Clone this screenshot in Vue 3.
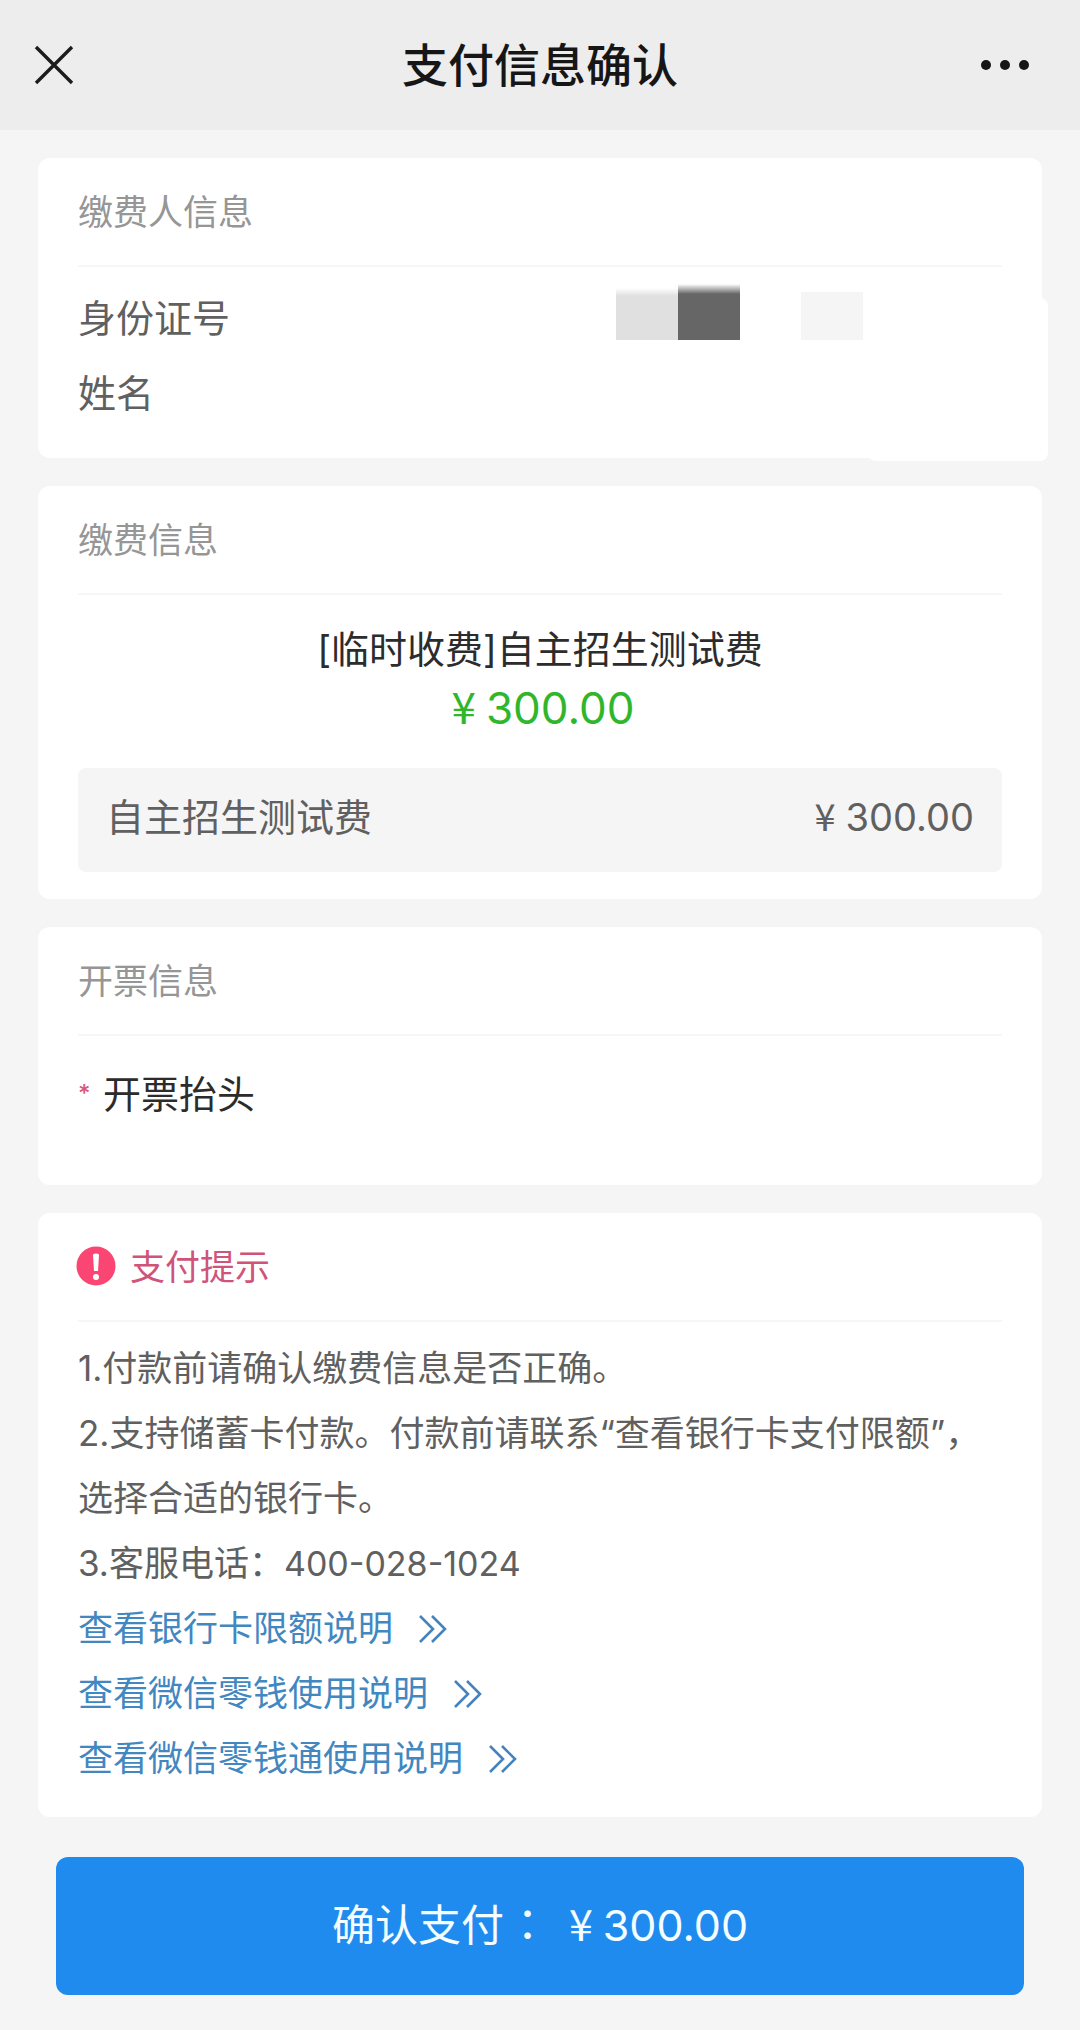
<script setup>
const notes = [
  { text: '1.付款前请确认缴费信息是否正确。' },
  { text: '2.支持储蓄卡付款。付款前请联系“查看银行卡支付限额”，选择合适的银行卡。' },
  { text: '3.客服电话：', phone: '400-028-1024' },
]
const links = ['查看银行卡限额说明', '查看微信零钱使用说明', '查看微信零钱通使用说明']
</script>

<template>
  <div class="page">
    <header class="topbar">
      <button class="icon-button" type="button" aria-label="关闭">
        <svg width="40" height="40" viewBox="0 0 40 40">
          <path d="M2 2 L38 38 M38 2 L2 38" fill="none" stroke="#1c1c1c" stroke-width="3.4" />
        </svg>
      </button>
      <h1>支付信息确认</h1>
      <button class="icon-button more" type="button" aria-label="更多">
        <svg width="52" height="12" viewBox="0 0 52 12" fill="#161616">
          <circle cx="7" cy="6" r="5" />
          <circle cx="26" cy="6" r="5" />
          <circle cx="45" cy="6" r="5" />
        </svg>
      </button>
    </header>

    <main>
      <section class="card payer">
        <h2>缴费人信息</h2>
        <dl>
          <div class="field">
            <dt>身份证号</dt>
            <dd class="mosaic"><i class="light"></i><i class="dark"></i><i class="pale"></i></dd>
          </div>
          <div class="field">
            <dt>姓名</dt>
            <dd></dd>
          </div>
        </dl>
      </section>

      <section class="card fee">
        <h2>缴费信息</h2>
        <p class="fee-name">[临时收费]自主招生测试费</p>
        <p class="fee-total"><span class="yen">¥</span>300.00</p>
        <div class="fee-item">
          <span>自主招生测试费</span>
          <span><span class="yen">¥</span>300.00</span>
        </div>
      </section>

      <section class="card invoice">
        <h2>开票信息</h2>
        <div class="invoice-field">
          <span class="required">*</span>
          <label for="invoice-title">开票抬头</label>
          <input id="invoice-title" type="text" required />
        </div>
      </section>

      <section class="card tips">
        <h2>
          <svg width="40" height="44" viewBox="0 0 40 44">
            <circle cx="20" cy="24" r="19.5" fill="#fb4674" />
            <path d="M17 12.5 Q20 10.5 23 12.5 L22 29 H18 Z" fill="#fff" />
            <circle cx="20" cy="35" r="3" fill="#fff" />
          </svg>
          支付提示
        </h2>
        <div class="notes">
          <p v-for="note in notes" :key="note.text">
            {{ note.text }}<span v-if="note.phone" class="phone">{{ note.phone }}</span>
          </p>
          <a v-for="link in links" :key="link" href="#">
            {{ link }}
            <svg width="28" height="28" viewBox="0 0 28 28">
              <path d="M1 1 L14 14 L1 27 M13 1 L26 14 L13 27" fill="none" stroke="#4583bd" stroke-width="2.6" />
            </svg>
          </a>
        </div>
      </section>

      <button class="pay" type="button">
        确认支付<span class="colon">：</span><span class="yen">¥</span>300.00
      </button>
    </main>
  </div>
</template>

<style>
body {
  margin: 0;
  background: #f5f5f5;
}
</style>

<style scoped>
.page {
  font-family: Inter, "Noto Sans CJK SC", sans-serif;
  font-size: 38px;
  color: #606060;
  background: #f5f5f5;
}

h1,
h2,
p,
dl,
dd {
  margin: 0;
}

button {
  border: 0;
  padding: 0;
  font-family: inherit;
  cursor: pointer;
}

.topbar {
  display: grid;
  grid-template-columns: 1fr auto 1fr;
  align-items: center;
  height: 130px;
  padding: 0 34px;
  background: #ededed;
}

.topbar h1 {
  font-size: 46px;
  font-weight: 500;
  line-height: 60px;
  color: #161616;
}

.icon-button {
  display: flex;
  align-items: center;
  justify-self: start;
  height: 60px;
  background: none;
}

.more {
  justify-self: end;
  padding-right: 15px;
}

main {
  display: flex;
  flex-direction: column;
  gap: 28px;
  padding: 28px 38px 35px;
}

.card {
  position: relative;
  padding: 0 40px;
  background: #fff;
  border-radius: 12px;
}

.card h2 {
  display: flex;
  align-items: center;
  box-sizing: border-box;
  height: 109px;
  padding-bottom: 5px;
  border-bottom: 2px solid #f6f6f6;
  font-size: 35px;
  font-weight: 400;
  color: #969696;
}

.payer {
  padding-bottom: 27px;
}

.payer::after {
  content: "";
  position: absolute;
  top: 140px;
  right: -6px;
  bottom: -3px;
  width: 180px;
  background: #fff;
  border-radius: 8px;
}

.payer dl {
  padding-top: 14px;
}

.field {
  display: flex;
  justify-content: space-between;
  height: 75px;
  line-height: 75px;
}

.mosaic {
  display: flex;
  align-items: flex-end;
  padding: 0 139px 16px 0;
}

.mosaic i {
  width: 62px;
  height: 52px;
}

.mosaic .light {
  background: linear-gradient(#fff, #e0e0e0 8px);
}

.mosaic .dark {
  height: 56px;
  background: linear-gradient(#fff, #666 10px);
}

.mosaic .pale {
  height: 48px;
  margin-left: 61px;
  background: #f5f5f5;
}

.fee {
  padding-bottom: 27px;
}

.fee-name {
  padding-top: 24px;
  line-height: 60px;
  text-align: center;
  color: #2c2c2c;
}

.fee-total {
  padding-left: 6px;
  font-size: 44px;
  line-height: 58px;
  text-align: center;
  color: #2fb62b;
}

.yen {
  margin-right: 10px;
  font-family: "Noto Sans CJK SC", sans-serif;
  line-height: 1;
}

.fee-item {
  display: flex;
  align-items: baseline;
  justify-content: space-between;
  box-sizing: border-box;
  height: 104px;
  margin-top: 31px;
  padding: 0 28px;
  line-height: 98px;
  background: #f5f5f5;
  border-radius: 8px;
}

.invoice {
  padding-bottom: 61px;
}

.invoice-field {
  display: flex;
  align-items: center;
  padding-top: 28px;
  line-height: 60px;
  color: #2c2c2c;
}

.required {
  width: 25px;
  font-size: 24px;
  font-weight: 500;
  color: #d45a7c;
}

.invoice-field input {
  flex: 1;
  min-width: 0;
  height: 60px;
  margin-left: 24px;
  padding: 0;
  border: 0;
  outline: 0;
  background: none;
  font: inherit;
}

.tips {
  padding-bottom: 26px;
}

.card.tips h2 {
  gap: 14px;
  color: #d0547a;
}

.tips h2 svg {
  margin-left: -2px;
}

.notes {
  padding-top: 14px;
  font-size: 35px;
  line-height: 65px;
}

.phone {
  font-size: 34px;
  line-height: 1;
}

.notes a {
  display: flex;
  align-items: center;
  gap: 26px;
  color: #4287c0;
  text-decoration: none;
}

.pay {
  height: 138px;
  margin: 12px 18px 0;
  padding-bottom: 8px;
  border-radius: 12px;
  background: #208bee;
  color: #f4fdff;
  font-size: 43px;
}

.colon {
  margin: 0 20px 0 2px;
  font-family: "Noto Sans CJK TC", sans-serif;
}
</style>
